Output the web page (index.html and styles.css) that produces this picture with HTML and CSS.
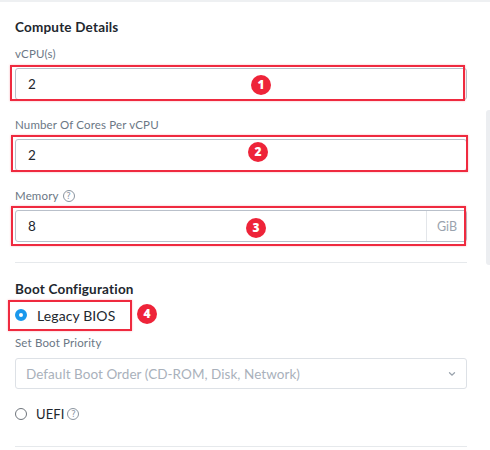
FILE: index.html
```html
<!DOCTYPE html>
<html>
<head>
<meta charset="utf-8">
<link rel="stylesheet" href="styles.css">
</head>
<body>
<div class="topline"></div>
<div class="scroll"></div>
<div class="panel">
  <h2 class="heading">Compute Details</h2>

  <div class="field">
    <label class="label">vCPU(s)</label>
    <div class="input"><span class="value">2</span></div>
    <div class="ann ann-1"></div>
    <span class="badge badge-1">1</span>
  </div>

  <div class="field">
    <label class="label">Number Of Cores Per vCPU</label>
    <div class="input"><span class="value">2</span></div>
    <div class="ann ann-2"></div>
    <span class="badge badge-2">2</span>
  </div>

  <div class="field last">
    <label class="label">Memory <span class="help">?</span></label>
    <div class="input"><span class="value">8</span><span class="unit">GiB</span></div>
    <div class="ann ann-3"></div>
    <span class="badge badge-3">3</span>
  </div>

  <div class="divider"></div>

  <h2 class="heading boot">Boot Configuration</h2>
  <div class="radio-row legacy">
    <span class="radio checked"></span>
    <span class="radio-text">Legacy BIOS</span>
    <div class="ann ann-4"></div>
    <span class="badge badge-4">4</span>
  </div>
  <label class="label prio">Set Boot Priority</label>
  <div class="select">
    <span class="placeholder">Default Boot Order (CD-ROM, Disk, Network)</span>
    <svg class="chev" width="8" height="6" viewBox="0 0 8 6"><path d="M1.5 1.8 L4 4.2 L6.5 1.8" fill="none" stroke="#9aa3ad" stroke-width="1.3" stroke-linecap="round"/></svg>
  </div>
  <div class="radio-row uefi">
    <span class="radio"></span>
    <span class="radio-text">UEFI</span>
    <span class="help">?</span>
  </div>
  <div class="divider bottom"></div>
</div>
</body>
</html>
```
FILE: styles.css
```css
html, body {
  margin: 0;
  padding: 0;
  background: #ffffff;
}
body {
  font-family: Lato, "Open Sans", sans-serif;
  color: #22272e;
  width: 490px;
  height: 450px;
  overflow: hidden;
  position: relative;
}
.topline {
  height: 2px;
  background: #eef0f2;
}
.scroll {
  position: absolute;
  right: 0;
  top: 110px;
  width: 4px;
  height: 155px;
  background: #eceef1;
  border-radius: 3px 0 0 3px;
}
.panel {
  width: 452px;
  padding: 16px 0 0 15px;
}
.heading {
  margin: 0;
  font-size: 13.5px;
  line-height: 18px;
  font-weight: 700;
  letter-spacing: 0.2px;
  color: #22272e;
}
.field {
  position: relative;
  margin-top: 11px;
}
.field + .field {
  margin-top: 18px;
}
.label {
  display: flex;
  align-items: center;
  gap: 4px;
  font-size: 11.5px;
  line-height: 14px;
  letter-spacing: 0.15px;
  color: #6b7785;
}
.input {
  margin-top: 7px;
  height: 30px;
  border: 1px solid #b9c0ca;
  border-radius: 3px;
  display: flex;
  align-items: center;
  padding-left: 12px;
}
.value {
  flex: 1;
  font-size: 13.5px;
  color: #22272e;
}
.unit {
  height: 100%;
  display: flex;
  align-items: center;
  padding: 0 9px 0 10px;
  border-left: 1px solid #e3e6ea;
  font-size: 12.5px;
  color: #9aa3ae;
}
.help {
  width: 10px;
  height: 10px;
  border: 1px solid #8a949f;
  border-radius: 50%;
  font-size: 8.5px;
  line-height: 10px;
  text-align: center;
  color: #8a949f;
  display: inline-block;
  font-family: "DejaVu Sans", sans-serif;
}
.ann {
  position: absolute;
  border: 2px solid #ef2a3f;
  box-shadow: 0 0 2px rgba(239, 42, 63, 0.35);
  pointer-events: none;
}
.ann-1 { left: -5px; right: 2px; top: 18px; bottom: -1px; }
.ann-2 { left: -4px; right: -1px; top: 17px; bottom: -1px; }
.ann-3 { left: -4px; right: 1px; top: 17px; bottom: -4px; }
.badge {
  position: absolute;
  width: 20px;
  height: 20px;
  border-radius: 50%;
  background: #ee2439;
  color: #fff;
  font-size: 12px;
  font-weight: 900;
  line-height: 20px;
  text-align: center;
  font-family: "Open Sans", sans-serif;
}
.badge-1 { left: 236px; top: 28px; }
.badge-2 { left: 233px; top: 24px; }
.badge-3 { left: 231px; top: 29px; }
.badge-4 { left: 122px; top: -1px; }
.divider {
  height: 1px;
  background: #e6e9ec;
  margin-top: 20px;
}
.heading.boot {
  margin-top: 17px;
}
.radio-row {
  position: relative;
  display: flex;
  align-items: center;
  height: 20px;
}
.legacy {
  margin-top: 7px;
}
.ann-4 {
  left: -7px;
  top: -5px;
  width: 120px;
  height: 27px;
}
.radio {
  width: 12px;
  height: 12px;
  border-radius: 50%;
  box-sizing: border-box;
  border: 1px solid #6f757c;
  margin-right: 10px;
}
.radio.checked {
  border: 4px solid #1a98ec;
  background: #fff;
}
.radio-text {
  font-size: 14px;
  letter-spacing: 0.1px;
  color: #22272e;
}
.uefi {
  margin-top: 15px;
}
.uefi .radio {
  margin-right: 9px;
}
.uefi .radio-text {
  font-size: 13px;
  margin-right: 3px;
}
.prio {
  margin-top: 11px;
}
.select {
  margin-top: 8px;
  height: 29px;
  border: 1px solid #dde1e6;
  border-radius: 3px;
  display: flex;
  align-items: center;
  padding: 0 10px 0 10px;
  justify-content: space-between;
}
.placeholder {
  font-size: 13.5px;
  letter-spacing: 0.05px;
  color: #a9b1bb;
}
.divider.bottom {
  margin-top: 22px;
}
```
